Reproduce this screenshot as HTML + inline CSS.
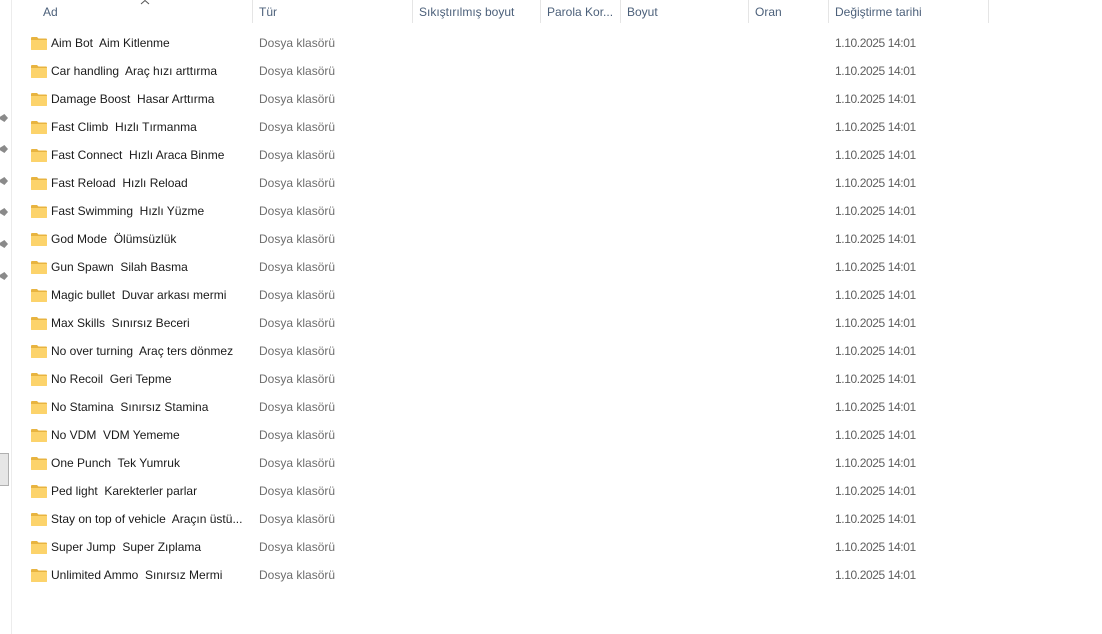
<!DOCTYPE html>
<html><head><meta charset="utf-8"><style>
body{margin:0;width:1102px;height:634px;background:#fff;overflow:hidden;position:relative;font-family:"Segoe UI","Liberation Sans",sans-serif;font-size:12px;}
.h{position:absolute;top:5px;color:#4c607a;font-size:12px;}
.sep{position:absolute;top:0;height:23px;width:1px;background:#e5e5e5;}
.r{position:absolute;left:0;height:28px;width:1102px;}
.f{position:absolute;left:31px;top:6px;width:16px;height:13px;}
.n{position:absolute;left:51px;top:5px;color:#1a1a1a;white-space:nowrap;}
.t{position:absolute;left:259px;top:5px;color:#6d6d6d;}
.d{position:absolute;left:835px;top:5px;color:#5f5f5f;letter-spacing:-0.4px;}
.pin{position:absolute;left:0;width:8px;height:8px;background:#8a8a8a;clip-path:polygon(0 35%,55% 0,100% 50%,55% 100%,0 65%);}
</style></head><body>
<div style="position:absolute;left:11px;top:0;width:1px;height:634px;background:#ececec"></div>
<div style="position:absolute;left:0;top:453px;width:8px;height:31px;border:1px solid #b0b0b0;border-left:none;background:#e6e6e6"></div>
<div class="pin" style="top:114px"></div><div class="pin" style="top:145px"></div><div class="pin" style="top:177px"></div><div class="pin" style="top:208px"></div><div class="pin" style="top:240px"></div><div class="pin" style="top:272px"></div>
<svg style="position:absolute;left:140px;top:0" width="10" height="5"><path d="M1 4 L5 0.5 L9 4" stroke="#555" fill="none"/></svg>
<div class="h" style="left:43px">Ad</div>
<div class="h" style="left:259px">Tür</div>
<div class="h" style="left:419px">Sıkıştırılmış boyut</div>
<div class="h" style="left:547px">Parola Kor...</div>
<div class="h" style="left:627px">Boyut</div>
<div class="h" style="left:755px">Oran</div>
<div class="h" style="left:835px">Değiştirme tarihi</div>
<div class="sep" style="left:252px"></div><div class="sep" style="left:412px"></div><div class="sep" style="left:540px"></div><div class="sep" style="left:620px"></div><div class="sep" style="left:748px"></div><div class="sep" style="left:828px"></div><div class="sep" style="left:988px"></div>
<div id="rows"></div>
<script>
var names=["Aim Bot  Aim Kitlenme","Car handling  Araç hızı arttırma","Damage Boost  Hasar Arttırma","Fast Climb  Hızlı Tırmanma","Fast Connect  Hızlı Araca Binme","Fast Reload  Hızlı Reload","Fast Swimming  Hızlı Yüzme","God Mode  Ölümsüzlük","Gun Spawn  Silah Basma","Magic bullet  Duvar arkası mermi","Max Skills  Sınırsız Beceri","No over turning  Araç ters dönmez","No Recoil  Geri Tepme","No Stamina  Sınırsız Stamina","No VDM  VDM Yememe","One Punch  Tek Yumruk","Ped light  Karekterler parlar","Stay on top of vehicle  Araçın üstü...","Super Jump  Super Zıplama","Unlimited Ammo  Sınırsız Mermi"];
var h="";names.forEach(function(n,i){h+='<div class="r" style="top:'+(31+28*i)+'px"><svg class="f" viewBox="0 0 16 13"><path d="M0 1 Q0 0 1 0 H6 L7.5 1.5 H15 Q16 1.5 16 2.5 V12 Q16 13 15 13 H1 Q0 13 0 12Z" fill="#e8b440"/><path d="M0 3 H16 V12 Q16 13 15 13 H1 Q0 13 0 12Z" fill="#fcd36b"/></svg><span class="n">'+n.replace(/  /g,"&nbsp; ")+'</span><span class="t">Dosya klasörü</span><span class="d">1.10.2025 14:01</span></div>'});
document.getElementById("rows").innerHTML=h;
</script>
</body></html>
